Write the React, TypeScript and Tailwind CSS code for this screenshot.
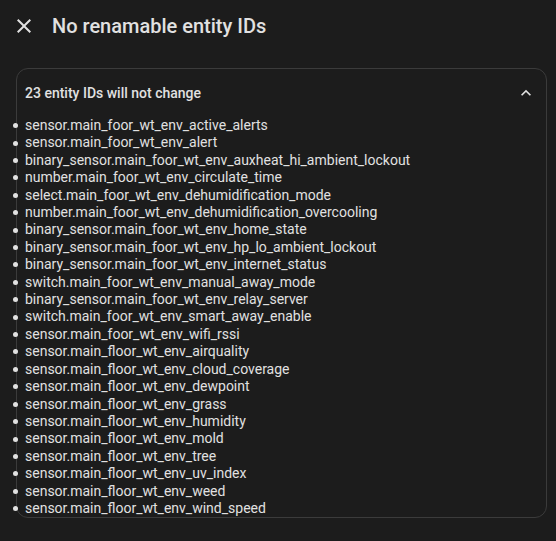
import React from "react";

const items = [
  "sensor.main_foor_wt_env_active_alerts",
  "sensor.main_foor_wt_env_alert",
  "binary_sensor.main_foor_wt_env_auxheat_hi_ambient_lockout",
  "number.main_foor_wt_env_circulate_time",
  "select.main_foor_wt_env_dehumidification_mode",
  "number.main_foor_wt_env_dehumidification_overcooling",
  "binary_sensor.main_foor_wt_env_home_state",
  "binary_sensor.main_foor_wt_env_hp_lo_ambient_lockout",
  "binary_sensor.main_foor_wt_env_internet_status",
  "switch.main_foor_wt_env_manual_away_mode",
  "binary_sensor.main_foor_wt_env_relay_server",
  "switch.main_foor_wt_env_smart_away_enable",
  "sensor.main_foor_wt_env_wifi_rssi",
  "sensor.main_floor_wt_env_airquality",
  "sensor.main_floor_wt_env_cloud_coverage",
  "sensor.main_floor_wt_env_dewpoint",
  "sensor.main_floor_wt_env_grass",
  "sensor.main_floor_wt_env_humidity",
  "sensor.main_floor_wt_env_mold",
  "sensor.main_floor_wt_env_tree",
  "sensor.main_floor_wt_env_uv_index",
  "sensor.main_floor_wt_env_weed",
  "sensor.main_floor_wt_env_wind_speed",
];

export default function App() {
  return (
    <div className="w-[556px] h-[541px] bg-[#1c1c1c] text-[#e1e1e1] font-['Roboto',sans-serif] overflow-hidden">
      <div className="flex items-center h-[52px] pl-[12px]">
        <button className="w-[24px] h-[24px] flex items-center justify-center text-[#e1e1e1]">
          <svg width="24" height="24" viewBox="0 0 24 24" fill="currentColor">
            <path d="M19,6.41L17.59,5L12,10.59L6.41,5L5,6.41L10.59,12L5,17.59L6.41,19L12,13.41L17.59,19L19,17.59L13.41,12L19,6.41Z" />
          </svg>
        </button>
        <h1 className="ml-[16px] text-[20px] font-medium leading-[24px] text-[#e1e1e1]">No renamable entity IDs</h1>
      </div>
      <div className="mx-[16px] mt-[16px] w-[531px] border border-[#3b3b3b] rounded-[12px] h-[450px]">
        <div className="flex items-center justify-between h-[48px] pl-[8px] pr-[10px]">
          <span className="text-[14px] font-medium text-[#e1e1e1]">23 entity IDs will not change</span>
          <svg width="20" height="20" viewBox="0 0 24 24" fill="currentColor" className="text-[#e1e1e1]">
            <path d="M7.41,15.41L12,10.83L16.59,15.41L18,14L12,8L6,14L7.41,15.41Z" />
          </svg>
        </div>
        <ul className="text-[14px] leading-[17.4px] text-[#e1e1e1]">
          {items.map((t) => (
            <li key={t} className="flex items-center">
              <span className="ml-[-4px] w-[5px] h-[5px] rounded-full bg-[#e1e1e1] shrink-0" />
              <span className="ml-[7px]">{t}</span>
            </li>
          ))}
        </ul>
      </div>
    </div>
  );
}
